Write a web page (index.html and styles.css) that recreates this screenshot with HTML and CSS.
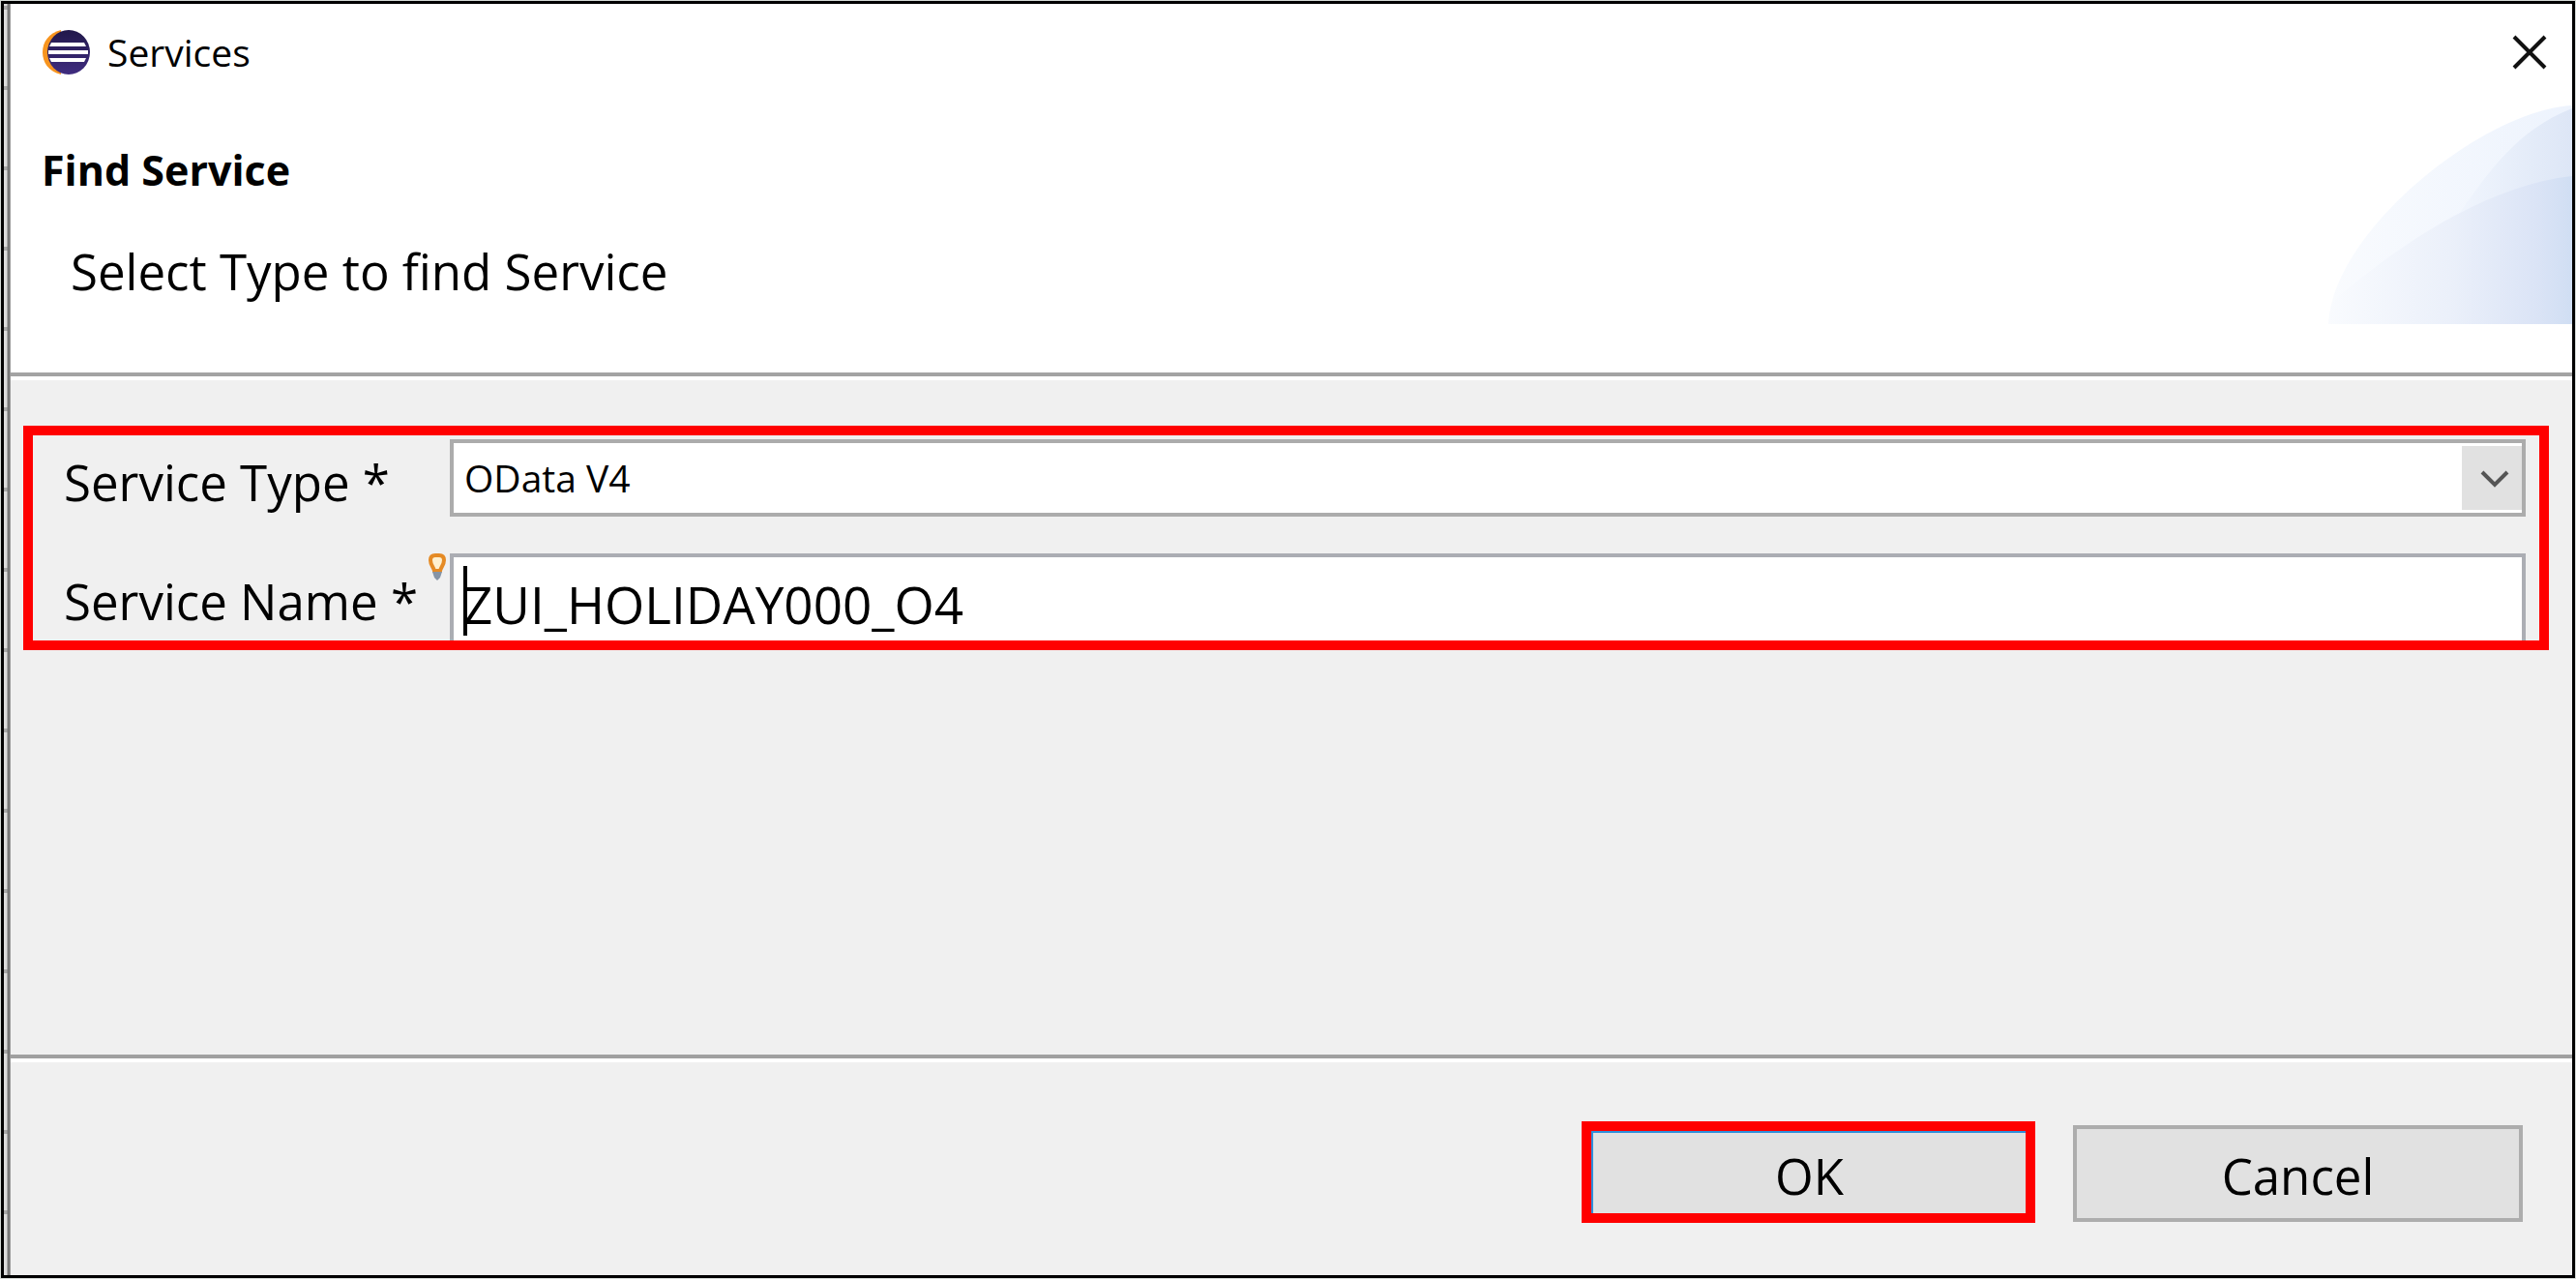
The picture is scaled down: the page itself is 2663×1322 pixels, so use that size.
FILE: index.html
```html
<!DOCTYPE html>
<html lang="en">
<head>
<meta charset="utf-8">
<title>Services</title>
<link rel="stylesheet" href="styles.css">
</head>
<body>
<div class="frame">
  <div class="backdrop-edge"></div>
  <main class="dialog">
    <header class="banner">
      <div class="titlebar">
        <svg class="app-icon" viewBox="0 0 50 48" aria-hidden="true">
          <defs>
            <linearGradient id="globe" x1="0" y1="0" x2="0" y2="1">
              <stop offset="0" stop-color="#21184a"/>
              <stop offset="1" stop-color="#3f2c80"/>
            </linearGradient>
          </defs>
          <path d="M20 1C7 4 1 14 1 24s6 20 19 23Z" fill="#f7941e"/>
          <ellipse cx="28" cy="24" rx="22" ry="23" fill="url(#globe)"/>
          <path d="M10 14h34l2 4H8ZM7 22h41v4H7ZM8 30h38l-2 4H10Z" fill="#fff"/>
        </svg>
        <span class="title">Services</span>
        <button class="close" type="button" aria-label="Close">
          <svg viewBox="0 0 36 36" aria-hidden="true"><path d="M2 2 34 34M34 2 2 34"/></svg>
        </button>
      </div>
      <h1 class="heading">Find Service</h1>
      <p class="message">Select Type to find Service</p>
      <svg class="swoosh" viewBox="0 0 252 226" preserveAspectRatio="none" aria-hidden="true">
        <defs>
          <linearGradient id="outer"><stop offset="0" stop-color="#f9fbfe"/><stop offset="1" stop-color="#edf3fd"/></linearGradient>
          <linearGradient id="side"><stop offset="0" stop-color="#f0f5fd"/><stop offset="1" stop-color="#dde6f6"/></linearGradient>
          <linearGradient id="inner"><stop offset="0" stop-color="#f9fbfe"/><stop offset=".5" stop-color="#ebf0fa"/><stop offset=".85" stop-color="#dbe4f6"/><stop offset="1" stop-color="#d0def3"/></linearGradient>
        </defs>
        <path d="M0 226C4 130 160 5 252 0V226Z" fill="url(#outer)"/>
        <path d="M135 112C165 70 195 25 252 3V226H135Z" fill="url(#side)"/>
        <path d="M0 226C2 210 6 200 12 196C85 135 170 82 252 73V226Z" fill="url(#inner)"/>
      </svg>
    </header>
    <form class="form">
      <section class="fields">
        <label class="label" for="type">Service Type *</label>
        <div class="combo">
          <select class="select" id="type"><option>OData V4</option></select>
          <svg class="arrow" viewBox="0 0 62 66" aria-hidden="true"><path d="M21 27 34 40 47 27"/></svg>
        </div>
        <label class="label" for="name">Service Name *</label>
        <div class="text-field">
          <svg class="hint" viewBox="0 0 18 28" aria-hidden="true">
            <path d="M6 18C5 14 2 12 2 7q0-5 5-5h4q5 0 5 5c0 5-3 7-4 11Z" fill="#fff0cf" stroke="#e58a24" stroke-width="4"/>
            <path d="M4 19h10l-2 6-3 3-3-3Z" fill="#8694a5"/>
          </svg>
          <input class="input" id="name" type="text" value="ZUI_HOLIDAY000_O4">
          <span class="caret"></span>
        </div>
      </section>
      <footer class="actions">
        <div class="callout"><button class="button primary" type="button">OK</button></div>
        <button class="button" type="button">Cancel</button>
      </footer>
    </form>
  </main>
</div>
</body>
</html>
```
FILE: styles.css
```css
* { box-sizing: border-box; }

body {
  margin: 0;
  padding: 1px;
  min-height: 100vh;
  display: flex;
  background: #d4dad6;
  color: #000;
  font-family: "Open Sans", "Noto Sans", sans-serif;
  font-size: 51px;
  line-height: 64px;
}

.frame {
  flex: 1;
  display: flex;
  border: 3px solid #000;
}

.backdrop-edge {
  width: 7px;
  background:
    linear-gradient(90deg, transparent 3px, #777 4px, #777 6px, #bbb 7px),
    repeating-linear-gradient(#dcdcdc 0 2px, #a8a8a8 2px 6px, #dcdcdc 6px 83px);
}

.dialog {
  flex: 1;
  display: flex;
  flex-direction: column;
  background: #f0f0f0;
}

.banner {
  position: relative;
  height: 385px;
  padding: 22px 32px 0;
  background: #fff;
  border-bottom: 4px solid #a3a3a3;
}

.titlebar {
  display: flex;
  align-items: center;
  height: 56px;
}

.app-icon { width: 50px; height: 48px; }

.title {
  flex: 1;
  margin-left: 18px;
  font-size: 39px;
}

.close {
  width: 36px;
  height: 36px;
  margin-right: -6px;
  padding: 0;
  border: 0;
  background: none;
}

.close svg {
  display: block;
  fill: none;
  stroke: #111;
  stroke-width: 4;
}

.heading {
  margin: 62px 0 0;
  font-size: 43px;
  line-height: 64px;
}

.message { margin: 40px 0 0 30px; }

.swoosh {
  position: absolute;
  right: 0;
  bottom: 50px;
  width: 252px;
  height: 226px;
}

.form {
  flex: 1;
  display: flex;
  flex-direction: column;
  border-top: 4px solid #fff;
}

.fields {
  display: grid;
  grid-template-columns: 399px 1fr;
  grid-template-rows: 80px 90px;
  row-gap: 38px;
  height: 232px;
  margin: 47px 24px 0 13px;
  padding: 4px 14px 0 32px;
  border: 10px solid #f00;
  overflow: hidden;
}

.label {
  align-self: center;
  padding-top: 8px;
}

.combo, .text-field { position: relative; }

.select {
  appearance: none;
  width: 100%;
  height: 80px;
  padding: 0 70px 0 11px;
  border: 4px solid #acacac;
  border-radius: 0;
  background: #fff;
  color: #000;
  font: 39px/64px "Open Sans", "Noto Sans", sans-serif;
}

.arrow {
  position: absolute;
  top: 7px;
  right: 4px;
  width: 62px;
  height: 66px;
  background: #e1e1e1;
  fill: none;
  stroke: #555;
  stroke-width: 4;
  pointer-events: none;
}

.input {
  width: 100%;
  height: 104px;
  padding: 0 10px;
  border: 4px solid #abadb3;
  background: #fff;
  color: #000;
  font: inherit;
  font-size: 53px;
}

.caret {
  position: absolute;
  top: 13px;
  left: 14px;
  width: 4px;
  height: 72px;
  background: #000;
}

.hint {
  position: absolute;
  top: 0;
  left: -22px;
  width: 18px;
  height: 28px;
}

.actions {
  display: flex;
  justify-content: flex-end;
  align-items: flex-start;
  gap: 39px;
  height: 228px;
  margin-top: auto;
  padding: 65px 51px 0;
  border-top: 4px solid #a0a0a0;
  box-shadow: inset 0 4px #fff;
}

.callout {
  width: 469px;
  height: 105px;
  border: 10px solid #f00;
  display: flex;
}

.button {
  width: 465px;
  height: 100px;
  margin-top: 4px;
  padding: 4px 0 0;
  border: 4px solid #adadad;
  background: #e1e1e1;
  color: #000;
  font: inherit;
}

.primary {
  width: 100%;
  height: 100%;
  margin: 0;
  border: 0;
  border-top: 2px solid #2f8fdc;
  border-left: 2px solid #2f8fdc;
}
```
